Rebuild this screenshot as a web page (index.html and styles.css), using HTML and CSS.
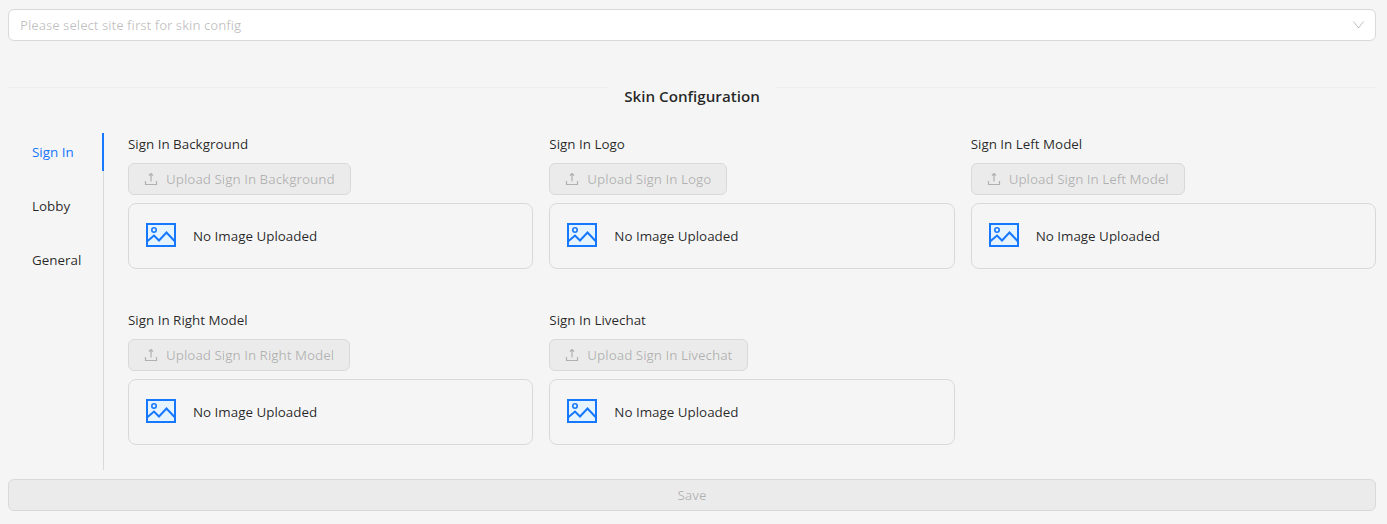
FILE: index.html
```html
<!DOCTYPE html>
<html lang="en">
<head>
<meta charset="utf-8">
<title>Skin Configuration</title>
<link rel="stylesheet" href="styles.css">
</head>
<body>
<svg class="defs" width="0" height="0" aria-hidden="true">
  <symbol id="pic" viewBox="0 0 30 24">
    <rect x="1" y="1" width="28" height="22" fill="#e6f4ff" stroke="#1677ff" stroke-width="2"/>
    <circle cx="8" cy="7" r="2.2" fill="none" stroke="#1677ff" stroke-width="1.6"/>
    <path d="M1 18.5 L8 12.5 L13 17.5 L20.5 9.5 L29 18.5" fill="none" stroke="#1677ff" stroke-width="2"/>
  </symbol>
  <symbol id="up" viewBox="0 0 14 14">
    <path d="M7 1.5V9.5M5 3.500L7 1.500L9 3.500M1.500 9V12.500H12.500V9" fill="none" stroke="currentColor" stroke-width="1.200"/>
  </symbol>
</svg>
<main class="page">
  <div class="select">
    <span class="placeholder">Please select site first for skin config</span>
    <svg class="chevron" viewBox="0 0 11 8" width="11" height="8"><path d="M0.500 0.500L5.500 7L10.500 0.500" fill="none" stroke="currentColor" stroke-width="1"/></svg>
  </div>
  <div class="divider">
    <span class="line"></span>
    <h2 class="title">Skin Configuration</h2>
    <span class="line"></span>
  </div>
  <div class="tabs">
    <nav class="nav">
      <a class="tab active">Sign In</a>
      <a class="tab">Lobby</a>
      <a class="tab">General</a>
    </nav>
    <section class="grid">
      <div class="item">
        <div class="label">Sign In Background</div>
        <button class="upload" disabled><svg class="upicon"><use href="#up"/></svg>Upload Sign In Background</button>
        <div class="box"><svg class="pic"><use href="#pic"/></svg><span>No Image Uploaded</span></div>
      </div>
      <div class="item">
        <div class="label">Sign In Logo</div>
        <button class="upload" disabled><svg class="upicon"><use href="#up"/></svg>Upload Sign In Logo</button>
        <div class="box"><svg class="pic"><use href="#pic"/></svg><span>No Image Uploaded</span></div>
      </div>
      <div class="item">
        <div class="label">Sign In Left Model</div>
        <button class="upload" disabled><svg class="upicon"><use href="#up"/></svg>Upload Sign In Left Model</button>
        <div class="box"><svg class="pic"><use href="#pic"/></svg><span>No Image Uploaded</span></div>
      </div>
      <div class="item">
        <div class="label">Sign In Right Model</div>
        <button class="upload" disabled><svg class="upicon"><use href="#up"/></svg>Upload Sign In Right Model</button>
        <div class="box"><svg class="pic"><use href="#pic"/></svg><span>No Image Uploaded</span></div>
      </div>
      <div class="item">
        <div class="label">Sign In Livechat</div>
        <button class="upload" disabled><svg class="upicon"><use href="#up"/></svg>Upload Sign In Livechat</button>
        <div class="box"><svg class="pic"><use href="#pic"/></svg><span>No Image Uploaded</span></div>
      </div>
    </section>
  </div>
  <button class="save" disabled>Save</button>
</main>
</body>
</html>
```
FILE: styles.css
```css
* { box-sizing: border-box; }
html, body { margin: 0; height: 100%; }
body {
  background: #f5f5f5;
  color: rgba(0,0,0,.85);
  font-family: "Open Sans", "Noto Sans", sans-serif;
  font-size: 13.4px;
  line-height: 22px;
}
.defs { position: absolute; }
.page { padding: 9px 11px 0 8px; display: flex; flex-direction: column; }
.select {
  height: 32px;
  background: #fff;
  border: 1px solid #d9d9d9;
  border-radius: 6px;
  padding: 0 11px;
  display: flex;
  align-items: center;
  justify-content: space-between;
}
.placeholder { color: rgba(0,0,0,.25); font-size: 13.2px; }
.chevron { color: rgba(0,0,0,.25); }
.divider { display: flex; margin-top: 46px; height: 46px; }
.line { flex: 1; height: 1px; background: #eeeeee; }
.title { margin: -3px 0 0; padding: 0 16px; font-size: 15.2px; font-weight: 600; line-height: 24px; height: 24px; }
.tabs { display: flex; height: 337px; }
.nav { width: 96px; border-right: 1px solid #d9d9d9; display: flex; flex-direction: column; gap: 16px; flex: none; }
.tab { height: 38px; padding: 0 24px; display: flex; align-items: center; margin-right: -1px; border-right: 2px solid transparent; }
.tab.active { color: #1677ff; border-right-color: #1677ff; }
.grid { flex: 1; margin-left: 24px; display: grid; grid-template-columns: repeat(3, 1fr); column-gap: 16px; row-gap: 40px; align-content: start; }
.item { display: flex; flex-direction: column; align-items: flex-start; }
.label { height: 22px; margin-bottom: 8px; }
.upload {
  height: 32px;
  padding: 0 15px;
  background: rgba(0,0,0,.04);
  border: 1px solid #d9d9d9;
  border-radius: 6px;
  color: rgba(0,0,0,.25);
  font: inherit;
  display: flex;
  align-items: center;
  gap: 8px;
}
.upicon { width: 14px; height: 14px; }
.box {
  margin-top: 8px;
  width: 100%;
  height: 66px;
  border: 1px solid #d9d9d9;
  border-radius: 8px;
  padding: 0 17px;
  display: flex;
  align-items: center;
  gap: 17px;
}
.pic { width: 30px; height: 24px; flex: none; margin-bottom: 2px; }
.save {
  margin-top: 9px;
  height: 32px;
  background: rgba(0,0,0,.04);
  border: 1px solid #d9d9d9;
  border-radius: 6px;
  color: rgba(0,0,0,.25);
  font: inherit;
}
```
